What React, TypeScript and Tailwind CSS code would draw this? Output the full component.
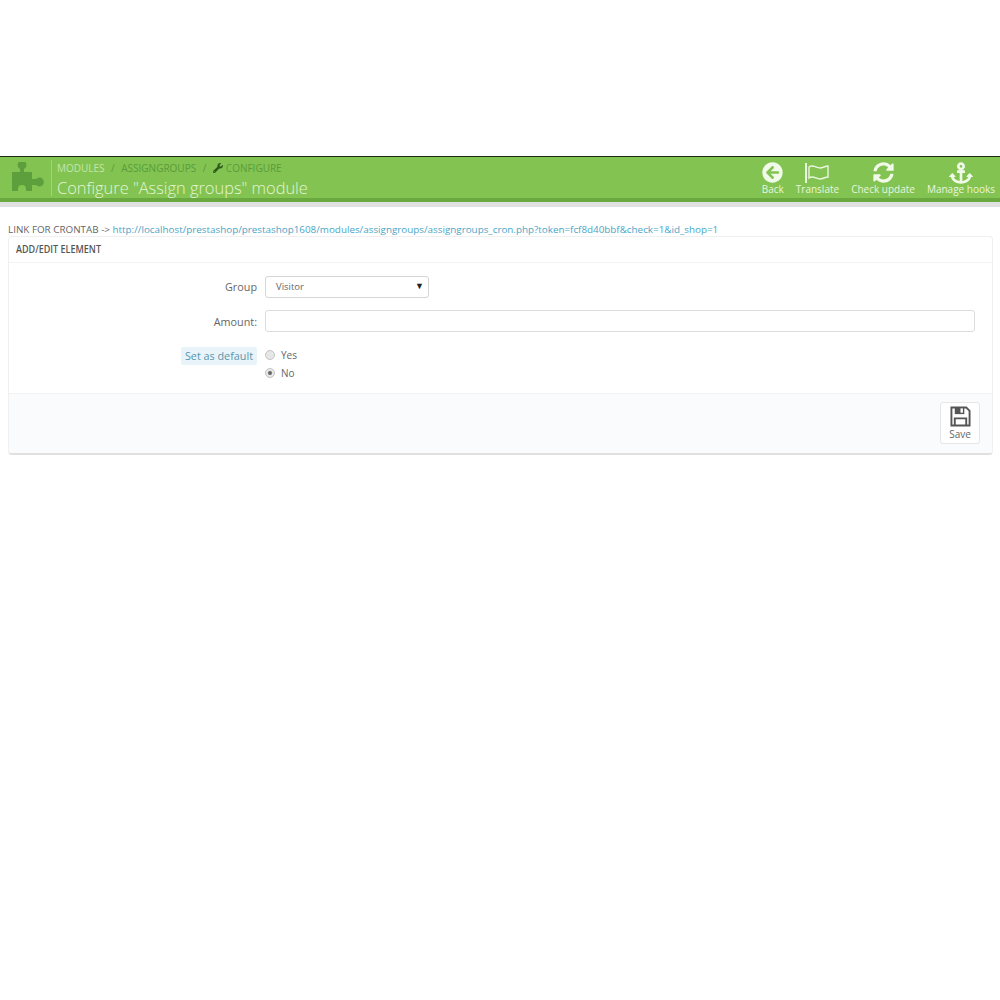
import { FaAnchor, FaArrowCircleLeft, FaSyncAlt, FaWrench } from "react-icons/fa";

function PuzzleIcon() {
  return (
    <svg viewBox="0 0 34 30" className="h-[30px] w-[34px] shrink-0 fill-[#5c9f3c]">
      <path d="M1 10H9V7A4.5 4.5 0 1 1 13 7V10H21V17H25A4.5 4.5 0 1 1 25 23H21V29H15V27A4 4 0 0 0 7 27V29H1Z" />
    </svg>
  );
}

function FlagIcon() {
  return (
    <svg viewBox="0 0 26 22" className="h-[22px] w-[26px] fill-none stroke-[#eaf6df]">
      <path d="M2 1V21" strokeWidth="2" />
      <path d="M5 5C9 2 12 6 16 6C19 6 21 4 24 4V15C21 15 19 17 16 17C12 17 9 13 5 16Z" strokeWidth="1.4" />
    </svg>
  );
}

function SaveIcon() {
  return (
    <svg viewBox="0 0 22 22" className="h-[21px] w-[21px] fill-none stroke-[#555]">
      <path d="M1.5 1.5H17L20.5 5V20.5H1.5Z" strokeWidth="2" />
      <rect x="5" y="1.5" width="10" height="7" fill="#555" stroke="none" />
      <rect x="11" y="2.5" width="2.5" height="4.5" fill="#fff" stroke="none" />
      <path d="M5 20.5V13H17V20.5" strokeWidth="2" />
    </svg>
  );
}

const toolbar = [
  { label: "Back", icon: <FaArrowCircleLeft className="text-[21px]" /> },
  { label: "Translate", icon: <FlagIcon /> },
  { label: "Check update", icon: <FaSyncAlt className="text-[21px]" /> },
  { label: "Manage hooks", icon: <FaAnchor className="text-[24px]" /> },
];

export default function App() {
  return (
    <div className="min-h-[1000px] bg-white font-['Open_Sans',sans-serif] text-[#666]">
      <div className="h-[156px]" />

      <header className="border-t border-[#1c2a12] bg-[#82c352]">
        <div className="flex h-[41px] items-center">
          <div className="ml-[11px] mt-[-1px]">
            <PuzzleIcon />
          </div>
          <div className="ml-[6px] mt-[1px] h-[36px] border-l border-[#9ed67c] pl-[5px]">
            <div className="flex h-[15px] items-center text-[10px] leading-none">
              <span className="text-[#c4e6a9]">MODULES</span>
              <span className="mx-[6.5px] text-[#5b9c3a]">/</span>
              <span className="text-[#5a9c3a]">ASSIGNGROUPS</span>
              <span className="mx-[6.5px] text-[#5b9c3a]">/</span>
              <FaWrench className="mr-[3px] text-[10px] text-[#2f5a1c]" />
              <span className="text-[#5a9c3a]">CONFIGURE</span>
            </div>
            <h1 className="mt-[3px] text-[16.4px] font-light leading-[20px] text-[#e4f5d4]">Configure "Assign groups" module</h1>
          </div>
          <div className="ml-auto mr-[5px] flex items-start gap-[12px]">
            {toolbar.map((item) => (
              <div key={item.label} className="flex flex-col items-center text-[#f1fae8]">
                <div className="flex h-[24px] items-center">{item.icon}</div>
                <span className="mt-[-2px] text-[10px] leading-[12px] whitespace-nowrap text-[#e9f6dd]">{item.label}</span>
              </div>
            ))}
          </div>
        </div>
        <div className="h-[4px] bg-[#6aa93f]" />
      </header>
      <div className="h-[5px] bg-[#e0e0e0]" />

      <main className="px-[8px]">
        <p className="mt-[15px] whitespace-nowrap text-[9.85px] leading-[14px] text-[#666]">
          LINK FOR CRONTAB -&gt;{" "}
          <a className="text-[#4aa5c6]">http://localhost/prestashop/prestashop1608/modules/assigngroups/assigngroups_cron.php?token=fcf8d40bbf&amp;check=1&amp;id_shop=1</a>
        </p>

        <section className="mr-[-1px] rounded-[4px] border border-[#f0f0f0] border-b-2 border-b-[#e0e0e0] bg-white">
          <h2 className="flex h-[26px] items-center border-b border-[#f3f3f3] pl-[7px] text-[11px] font-semibold text-[#555]">
            <span className="inline-block origin-left scale-x-[0.82] whitespace-nowrap">ADD/EDIT ELEMENT</span>
          </h2>

          <div className="pt-[12px]">
            <div className="flex h-[23px] items-center">
              <label className="w-[248px] pt-[2px] text-right text-[10.8px]">Group</label>
              <div className="ml-[8px] flex h-[22px] w-[164px] items-center justify-between rounded-[3px] border border-[#d5d5d5] pl-[10px] pr-[4px] pt-[2px] text-[9.5px]">
                <span>Visitor</span>
                <span className="mt-[-3px] text-[9px] text-[#222]">▼</span>
              </div>
            </div>

            <div className="mt-[12px] flex h-[22px] items-center">
              <label className="w-[248px] pt-[2px] text-right text-[10.8px]">Amount:</label>
              <div className="ml-[8px] mr-[17px] h-[22px] flex-1 rounded-[3px] border border-[#dcdcdc]" />
            </div>

            <div className="mt-[15px] flex h-[46px] items-start">
              <div className="flex w-[248px] justify-end">
                <label className="rounded-[2px] bg-[#e9f4fa] px-[4px] text-[10.8px] leading-[18px] text-[#5a95ad]">Set as default</label>
              </div>
              <div className="ml-[8px] flex flex-col gap-[6px] pt-[2px] text-[10px]">
                <div className="flex h-[12px] items-center gap-[6px]">
                  <span className="h-[10px] w-[10px] rounded-full border border-[#c4c4c4] bg-[#e6e6e6]" />
                  <span>Yes</span>
                </div>
                <div className="flex h-[12px] items-center gap-[6px]">
                  <span className="flex h-[10px] w-[10px] items-center justify-center rounded-full border border-[#c4c4c4] bg-[#e6e6e6]">
                    <span className="h-[4px] w-[4px] rounded-full bg-[#666]" />
                  </span>
                  <span>No</span>
                </div>
              </div>
            </div>
          </div>

          <div className="flex h-[60px] items-start justify-end rounded-b-[4px] border-t border-[#f3f3f3] bg-[#fafbfd] pr-[12px] pt-[8px]">
            <button className="flex h-[42px] w-[40px] flex-col items-center justify-center rounded-[3px] border border-[#e6e6e6] bg-white text-[#666]">
              <SaveIcon />
              <span className="mt-[1px] text-[10px] leading-[13px]">Save</span>
            </button>
          </div>
        </section>
      </main>
    </div>
  );
}
